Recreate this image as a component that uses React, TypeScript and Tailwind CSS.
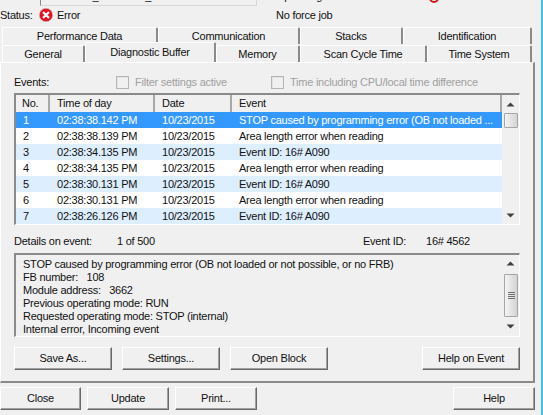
const font = "font-['Liberation_Sans',Arial,sans-serif]";

const rows = [
  ["1", "02:38:38.142 PM", "10/23/2015", "STOP caused by programming error (OB not loaded ..."],
  ["2", "02:38:38.139 PM", "10/23/2015", "Area length error when reading"],
  ["3", "02:38:34.135 PM", "10/23/2015", "Event ID: 16# A090"],
  ["4", "02:38:34.135 PM", "10/23/2015", "Area length error when reading"],
  ["5", "02:38:30.131 PM", "10/23/2015", "Event ID: 16# A090"],
  ["6", "02:38:30.131 PM", "10/23/2015", "Area length error when reading"],
  ["7", "02:38:26.126 PM", "10/23/2015", "Event ID: 16# A090"],
];

const details = [
  "STOP caused by programming error (OB not loaded or not possible, or no FRB)",
  "FB number:   108",
  "Module address:   3662",
  "Previous operating mode: RUN",
  "Requested operating mode: STOP (internal)",
  "Internal error, Incoming event",
];

function Btn({ label, w }: { label: string; w: string }) {
  return (
    <button
      type="button"
      className={`${w} h-[23px] shrink-0 flex items-center justify-center bg-[#f0f0f0] border border-t-white border-l-white border-r-[#696969] border-b-[#696969] shadow-[inset_-1px_-1px_0_#a0a0a0]`}
    >
      {label}
    </button>
  );
}

function Tab({ label, w, h = "h-[17px]", active = false }: { label: string; w: string; h?: string; active?: boolean }) {
  return (
    <div
      className={`${w} ${h} shrink-0 flex items-center justify-center bg-[#f0f0f0] border-l border-t border-white rounded-t-[2px] border-r-2 border-r-[#8a8a8a] ${active ? "pb-[1px]" : ""}`}
    >
      {label}
    </div>
  );
}

function Check({ label, w }: { label: string; w: string }) {
  return (
    <div className={`${w} flex items-center gap-[6px] text-[#a0a0a0]`}>
      <div className="w-[13px] h-[13px] border border-[#b5b5b5] shadow-[inset_1px_1px_0_#e2e2e2]" />
      <span>{label}</span>
    </div>
  );
}

function Arrow({ up }: { up?: boolean }) {
  return (
    <svg width="9" height="5" viewBox="0 0 9 5" className="shrink-0">
      <path d={up ? "M4.5 0.5 L8.5 4.5 L0.5 4.5 Z" : "M0.5 0.5 L8.5 0.5 L4.5 4.5 Z"} fill="#404040" />
    </svg>
  );
}

export default function App() {
  return (
    <div className={`${font} w-[543px] h-[415px] overflow-hidden flex bg-[#f0f0f0] text-[11px] tracking-[-0.24px] leading-[13px] text-[#111]`}>
      <div className="w-[541px] shrink-0 flex flex-col">
        {/* clipped path row */}
        <div className="h-[6px] overflow-hidden flex items-end">
          <span className="w-[40px] shrink-0 mb-[3px]">Path:</span>
          <div className="w-[217px] h-[20px] shrink-0 border-l border-r border-b border-l-[#8a8a8a] border-r-[#d8d8d8] border-b-[#d8d8d8] px-[2px] flex items-end">
            <span className="mb-[2px] whitespace-nowrap">SK072101_20151022_RA08 6/2 + 0/0 2/1</span>
          </div>
          <span className="ml-[19px] w-[153px] shrink-0 whitespace-nowrap mb-[3px]">Operating mode of the CPU:</span>
          <span className="w-[10px] h-[10px] rounded-full border-2 border-[#d01818] mb-[3px] shrink-0" />
          <span className="ml-[7px] mb-[3px]">STOP</span>
        </div>

        {/* status row */}
        <div className="h-[18px] flex items-center">
          <span className="w-[39px] shrink-0">Status:</span>
          <svg width="14" height="14" viewBox="0 0 14 14" className="shrink-0">
            <circle cx="7" cy="7" r="6.7" fill="#e8101c" stroke="#c8c8c8" strokeWidth="0.6" />
            <path d="M4 4 L10 10 M10 4 L4 10" stroke="#fff" strokeWidth="2.2" />
          </svg>
          <span className="ml-[4px] w-[219px] shrink-0">Error</span>
          <span>No force job</span>
        </div>

        {/* tabs */}
        <div className="flex pl-[2px] mt-[3px]">
          <Tab label="Performance Data" w="w-[156px]" />
          <Tab label="Communication" w="w-[142px]" />
          <Tab label="Stacks" w="w-[103px]" />
          <Tab label="Identification" w="w-[129px]" />
        </div>
        <div className="flex pl-[2px] items-end h-[18px]">
          <Tab label="General" w="w-[83px]" />
          <Tab label="Diagnostic Buffer" w="w-[131px]" h="h-[20px]" active />
          <Tab label="Memory" w="w-[84px]" />
          <Tab label="Scan Cycle Time" w="w-[127px]" />
          <Tab label="Time System" w="w-[105px]" />
        </div>

        {/* panel */}
        <div className="w-[535px] h-[321px] shrink-0 border-t border-t-white border-l border-l-white border-r-2 border-r-[#8a8a8a] border-b-2 border-b-[#8a8a8a] pl-[13px] pt-[13px] flex flex-col">
          <div className="flex items-center h-[13px]">
            <span className="w-[102px] shrink-0">Events:</span>
            <Check label="Filter settings active" w="w-[155px]" />
            <Check label="Time including CPU/local time difference" w="w-auto" />
          </div>

          {/* event table */}
          <div className="mt-[4px] w-[506px] h-[132px] shrink-0 flex border-t-2 border-l-2 border-t-[#8a8a8a] border-l-[#8a8a8a] border-r border-b border-r-white border-b-white">
            <div className="w-[486px] shrink-0 bg-white flex flex-col">
              <div className="h-[17px] shrink-0 flex bg-[#f0f0f0]">
                <div className="w-[34px] pl-[6px] flex items-center border-r-2 border-r-[#a8a8a8]">No.</div>
                <div className="w-[105px] pl-[7px] flex items-center border-r-2 border-r-[#a8a8a8]">Time of day</div>
                <div className="w-[77px] pl-[7px] flex items-center border-r-2 border-r-[#a8a8a8]">Date</div>
                <div className="flex-1 pl-[7px] flex items-center border-r-2 border-r-[#a8a8a8]">Event</div>
              </div>
              {rows.map((r, i) => (
                <div
                  key={r[0]}
                  className={`h-[16px] shrink-0 flex items-center whitespace-nowrap ${
                    i === 0 ? "bg-[#3399ff] text-white" : i % 2 === 0 ? "bg-[#ddeeff]" : "bg-white"
                  }`}
                >
                  <span className="w-[34px] pl-[7px] shrink-0">{r[0]}</span>
                  <span className="w-[105px] pl-[7px] shrink-0">{r[1]}</span>
                  <span className="w-[77px] pl-[7px] shrink-0">{r[2]}</span>
                  <span className="pl-[7px]">{r[3]}</span>
                </div>
              ))}
            </div>
            <div className="flex-1 flex flex-col items-center justify-between pt-[7px] pb-[6px] relative">
              <Arrow up />
              <div className="absolute top-[18px] left-[2px] w-[14px] h-[15px] rounded-[1px] border border-[#a5a5a5] bg-gradient-to-r from-[#f4f4f4] to-[#d4d4d4]" />
              <Arrow />
            </div>
          </div>

          {/* details line */}
          <div className="mt-[10px] h-[13px] flex items-center">
            <span className="w-[103px] shrink-0">Details on event:</span>
            <span className="w-[246px] shrink-0">1 of 500</span>
            <span className="w-[63px] shrink-0">Event ID:</span>
            <span>16# 4562</span>
          </div>

          {/* details box */}
          <div className="mt-[5px] w-[506px] h-[84px] shrink-0 flex border-t-2 border-l-2 border-t-[#8a8a8a] border-l-[#8a8a8a] border-r border-b border-r-white border-b-white">
            <div className="w-[486px] shrink-0 pl-[7px] pt-[3px] whitespace-pre">
              {details.map((d) => (
                <div key={d}>{d}</div>
              ))}
            </div>
            <div className="flex-1 flex flex-col items-center justify-between pt-[6px] pb-[7px] relative">
              <Arrow up />
              <div className="absolute top-[19px] left-[2px] w-[14px] h-[43px] rounded-[1px] border border-[#a5a5a5] bg-gradient-to-r from-[#f4f4f4] to-[#d4d4d4] flex flex-col items-center justify-center gap-[1px]">
                <div className="w-[7px] h-px bg-[#707070]" />
                <div className="w-[7px] h-px bg-[#707070]" />
                <div className="w-[7px] h-px bg-[#707070]" />
                <div className="w-[7px] h-px bg-[#707070]" />
              </div>
              <Arrow />
            </div>
          </div>

          <div className="mt-[10px] flex w-[506px]">
            <Btn label="Save As..." w="w-[98px]" />
            <Btn label="Settings..." w="w-[98px] ml-[10px]" />
            <Btn label="Open Block" w="w-[98px] ml-[10px]" />
            <Btn label="Help on Event" w="w-[98px] ml-auto" />
          </div>
        </div>

        {/* bottom buttons */}
        <div className="mt-[4px] flex w-[535px]">
          <Btn label="Close" w="w-[81px]" />
          <Btn label="Update" w="w-[82px] ml-[6px]" />
          <Btn label="Print..." w="w-[82px] ml-[6px]" />
          <Btn label="Help" w="w-[82px] ml-auto" />
        </div>
      </div>
      <div className="flex-1 bg-[#3bc3ee]" />
    </div>
  );
}
